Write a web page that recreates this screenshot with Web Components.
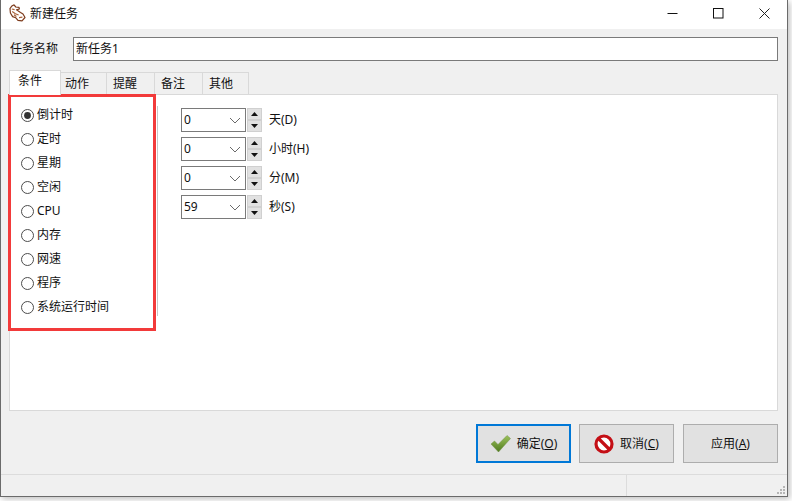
<!DOCTYPE html>
<html lang="zh"><head><meta charset="utf-8"><title>新建任务</title>
<style>
html,body{margin:0;padding:0;background:#fff;}
body{width:792px;height:501px;overflow:hidden;font:12px/16px "Noto Sans","Noto Sans CJK SC",sans-serif;color:#000;}
</style></head><body>
<task-dialog></task-dialog>
<script>
const FONT='"Noto Sans","Noto Sans CJK SC",sans-serif';
function def(name,html,init){
  customElements.define(name,class extends HTMLElement{
    constructor(){super();this.attachShadow({mode:'open'}).innerHTML=html;}
    connectedCallback(){init&&init(this);}
  });
}
def('title-bar',`<style>
:host{display:flex;align-items:center;height:29px;background:#fff;padding-left:8px;box-sizing:border-box;}
svg{display:block}
.t{margin-left:4px;font-size:12px;color:#111;flex:1;margin-top:-2px}
.b{display:flex;width:46px;justify-content:center;margin-top:-2px}
</style>
<svg width="17" height="18" viewBox="0 0 17 18" style="margin-top:-3px">
<path d="M1 4.5 C2 2.5 3.5 1 5 .8 L6.8 3 L10 3.4 L10.4 5 L7.5 5.8 L11.5 8.5 L14 10 L16 13.5 L13 16.8 L9 16.4 L6.8 13.8 L3.6 12.6 L1.4 9 Z" fill="#fff" stroke="#7d3b1c" stroke-width="1.2" stroke-linejoin="round"/>
<path d="M2.8 5 L5.6 5.6 M3.2 7.4 L6.4 9.8 L9.6 11 M5 10.8 L7.4 12.6 M10 13.6 L13.4 13.2" fill="none" stroke="#a9623a" stroke-width="1.2"/>
</svg>
<span class="t">新建任务</span>
<span class="b"><svg width="11" height="11"><path d="M0.5 5.5H10.5" stroke="#111" fill="none"/></svg></span>
<span class="b"><svg width="11" height="11"><rect x=".5" y=".5" width="9.5" height="9.5" stroke="#111" fill="none"/></svg></span>
<span class="b"><svg width="11" height="11"><path d="M.5 .5L10.5 10.5M10.5 .5L.5 10.5" stroke="#222" fill="none"/></svg></span>`);

def('name-row',`<style>
:host{display:flex;align-items:center;height:24px;margin-top:8px;}
label{width:63px;padding-left:1px;font-size:12px;color:#111}
.i{flex:1;height:24px;box-sizing:border-box;border:1px solid #7a7a7a;background:#fff;padding-left:2px;line-height:21px;font-size:12px;color:#111}
</style><label>任务名称</label><div class="i">新任务1</div>`);

def('tab-strip',`<style>
:host{display:flex;height:24px;margin-top:9px;align-items:flex-end;position:relative;z-index:1;}
</style><slot></slot>`);
def('tab-item',`<style>
:host{display:block;box-sizing:border-box;height:22px;background:#f0f0f0;border:1px solid #d9d9d9;border-bottom:0;border-left:0;text-align:left;font-size:12px;line-height:21px;color:#111;}
:host([selected]){height:25px;margin-bottom:-1px;background:#fff;border-left:1px solid #d9d9d9;line-height:20px;}
</style><slot></slot>`,el=>{el.style.width=el.getAttribute('w')+'px';el.style.paddingLeft=el.getAttribute('p')+'px';});

def('radio-item',`<style>
:host{display:flex;align-items:center;height:24px;font-size:12px;color:#111}
svg{display:block;margin-right:3px;flex:none}
</style><svg width="13" height="13"><circle cx="6.5" cy="6.5" r="6" fill="#fff" stroke="#4d4d4d"/><circle class="d" cx="6.5" cy="6.5" r="3.4" fill="#333" style="display:none"/></svg><slot></slot>`,
el=>{if(el.hasAttribute('checked'))el.shadowRoot.querySelector('.d').style.display='';});

def('spin-row',`<style>
:host{display:flex;align-items:center;height:24px;font-size:12px;color:#111}
.c{width:65px;height:24px;box-sizing:border-box;border:1px solid #7a7a7a;background:#fff;display:flex;align-items:center;justify-content:space-between;padding:0 3px 0 2px;}
.c svg{margin-right:1px}
.s{display:flex;flex-direction:column;gap:0;width:15px;margin:0 7px 0 1px;height:24px}
.u{flex:1;box-sizing:border-box;background:#e1e1e1;border:1px solid #d0d0d0;display:flex;align-items:center;justify-content:center;}
.l{line-height:20px;margin-top:-1px}
</style>
<div class="c"><span id="v"></span><svg width="12" height="7"><path d="M1 1L6 6L11 1" stroke="#6a6a6a" fill="none"/></svg></div>
<div class="s"><div class="u"><svg width="7" height="4"><path d="M3.5 0L7 4H0Z" fill="#111"/></svg></div><div class="u"><svg width="7" height="4"><path d="M0 0H7L3.5 4Z" fill="#111"/></svg></div></div>
<span class="l"><slot></slot></span>`,el=>{el.shadowRoot.getElementById('v').textContent=el.getAttribute('value');});

def('dlg-button',`<style>
:host{display:flex;align-items:center;justify-content:center;width:95px;height:39px;box-sizing:border-box;background:#e1e1e1;border:1px solid #adadad;font-size:12px;color:#111;gap:6px}
:host([primary]){border:2px solid #0078d7;}
::slotted(svg){display:block}
</style><slot name="icon"></slot><span><slot></slot></span>`);

def('status-bar',`<style>
:host{display:flex;flex:1;border-top:1px solid #dcdcdc;margin:0 -9px 0 -8px;position:relative}
.a{width:625px;border-right:1px solid #dcdcdc}
svg{position:absolute;right:0;bottom:0}
</style><div class="a"></div>
<svg width="12" height="12" fill="#b5b5b5"><rect x="8" y="2" width="2" height="2"/><rect x="5" y="5" width="2" height="2"/><rect x="8" y="5" width="2" height="2"/><rect x="2" y="8" width="2" height="2"/><rect x="5" y="8" width="2" height="2"/><rect x="8" y="8" width="2" height="2"/></svg>`);

def('task-dialog',`<style>
:host{display:flex;flex-direction:column;width:788px;height:497px;box-sizing:border-box;border:solid #6b6b6b;border-width:0 1px 1px 1px;background:#f0f0f0;box-shadow:2px 2px 6px rgba(0,0,0,.25);font-family:${FONT};}
.client{flex:1;display:flex;flex-direction:column;padding:0 9px 0 8px;min-height:0}
.panel{height:317px;box-sizing:border-box;background:#fff;border:1px solid #d9d9d9;display:flex;position:relative}
.radios{width:136px;padding:8px 0 0 11px;box-sizing:content-box;}
.rule{width:1px;height:210px;background:#c8c8c8;margin-top:11px}
.spins{margin:13px 0 0 23px;display:flex;flex-direction:column;gap:5px}
.mark{position:absolute;left:-2px;top:-1px;width:148px;height:237px;box-sizing:border-box;border:3px solid #f23a3a;pointer-events:none}
.foot{display:flex;justify-content:flex-end;gap:8px;margin-top:13px;margin-bottom:11px}
.foot dlg-button:last-child{margin-left:1px}
</style>
<title-bar></title-bar>
<div class="client">
<name-row></name-row>
<tab-strip><tab-item selected w="52" p="8">条件</tab-item><tab-item w="46" p="4">动作</tab-item><tab-item w="48" p="6">提醒</tab-item><tab-item w="48" p="6">备注</tab-item><tab-item w="46" p="6">其他</tab-item></tab-strip>
<div class="panel">
<div class="radios">
<radio-item checked>倒计时</radio-item><radio-item>定时</radio-item><radio-item>星期</radio-item><radio-item>空闲</radio-item><radio-item>CPU</radio-item><radio-item>内存</radio-item><radio-item>网速</radio-item><radio-item>程序</radio-item><radio-item>系统运行时间</radio-item>
</div>
<div class="rule"></div>
<div class="spins">
<spin-row value="0">天(D)</spin-row><spin-row value="0">小时(H)</spin-row><spin-row value="0">分(M)</spin-row><spin-row value="59">秒(S)</spin-row>
</div>
<div class="mark"></div>
</div>
<div class="foot">
<dlg-button primary><svg slot="icon" width="21" height="19" viewBox="0 0 21 19"><defs><linearGradient id="g" x1="0" y1="0" x2="0" y2="1"><stop offset="0" stop-color="#9cc25a"/><stop offset="1" stop-color="#4f7a1f"/></linearGradient></defs><path d="M1 10L4.5 7L8 10.5L17 1.5L20.5 4.5L8.5 18Z" fill="url(#g)" stroke="#6f8f45" stroke-width=".5"/></svg>确定(<u>O</u>)</dlg-button>
<dlg-button><svg slot="icon" width="20" height="20" viewBox="0 0 20 20"><circle cx="10" cy="10" r="8" fill="#fff" stroke="#c40f16" stroke-width="3.2"/><path d="M4.5 4.5L15.5 15.5" stroke="#c40f16" stroke-width="3.2"/></svg>取消(<u>C</u>)</dlg-button>
<dlg-button>应用(<u>A</u>)</dlg-button>
</div>
<status-bar></status-bar>
</div>`);
</script>
</body></html>
